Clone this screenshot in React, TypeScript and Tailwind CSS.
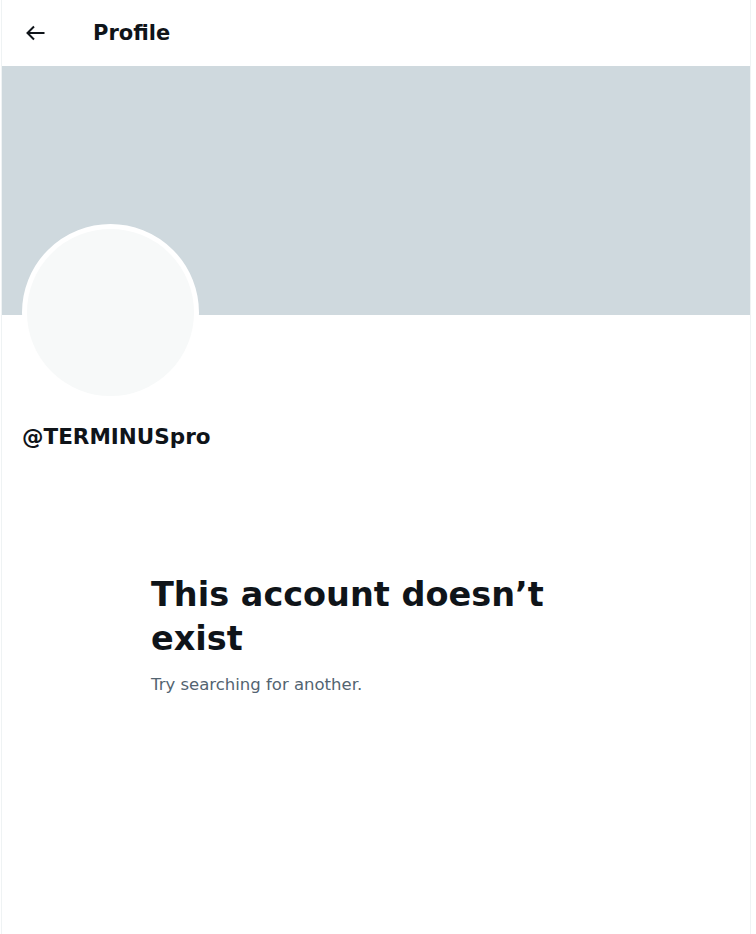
export default function App() {
  return (
    <div className="min-h-[934px] bg-white" style={{ fontFamily: '"DejaVu Sans", sans-serif' }}>
      <div className="ml-px w-[750px] min-h-[934px] border-x border-[#eff3f4] bg-white text-[#0f1419]">
        {/* header */}
        <div className="flex h-[66px] items-center pl-[23px]">
          <svg viewBox="0 0 20 20" className="h-5 w-5" fill="none" stroke="#0f1419" strokeWidth="2">
            <path d="M2.5 10H19.5M9 3.5L2.5 10L9 16.5" />
          </svg>
          <h2 className="ml-[48px] text-[21px] font-bold leading-none">Profile</h2>
        </div>

        {/* banner */}
        <div className="h-[249px] w-full bg-[#cfd9de]" />

        {/* avatar + handle */}
        <div className="px-[20px]">
          <div className="-mt-[91px] h-[177px] w-[177px] rounded-full border-[5px] border-white bg-[#f7f9f9]" />
          <div className="mt-[24px] text-[21.5px] font-bold leading-[24px]">@TERMINUSpro</div>
        </div>

        {/* empty state */}
        <div className="mx-auto mt-[124px] w-[450px]">
          <h1 className="text-[33.5px] font-bold leading-[44px]">This account doesn’t exist</h1>
          <p className="mt-[14px] text-[16.5px] leading-[20px] text-[#536471]">Try searching for another.</p>
        </div>
      </div>
    </div>
  )
}
